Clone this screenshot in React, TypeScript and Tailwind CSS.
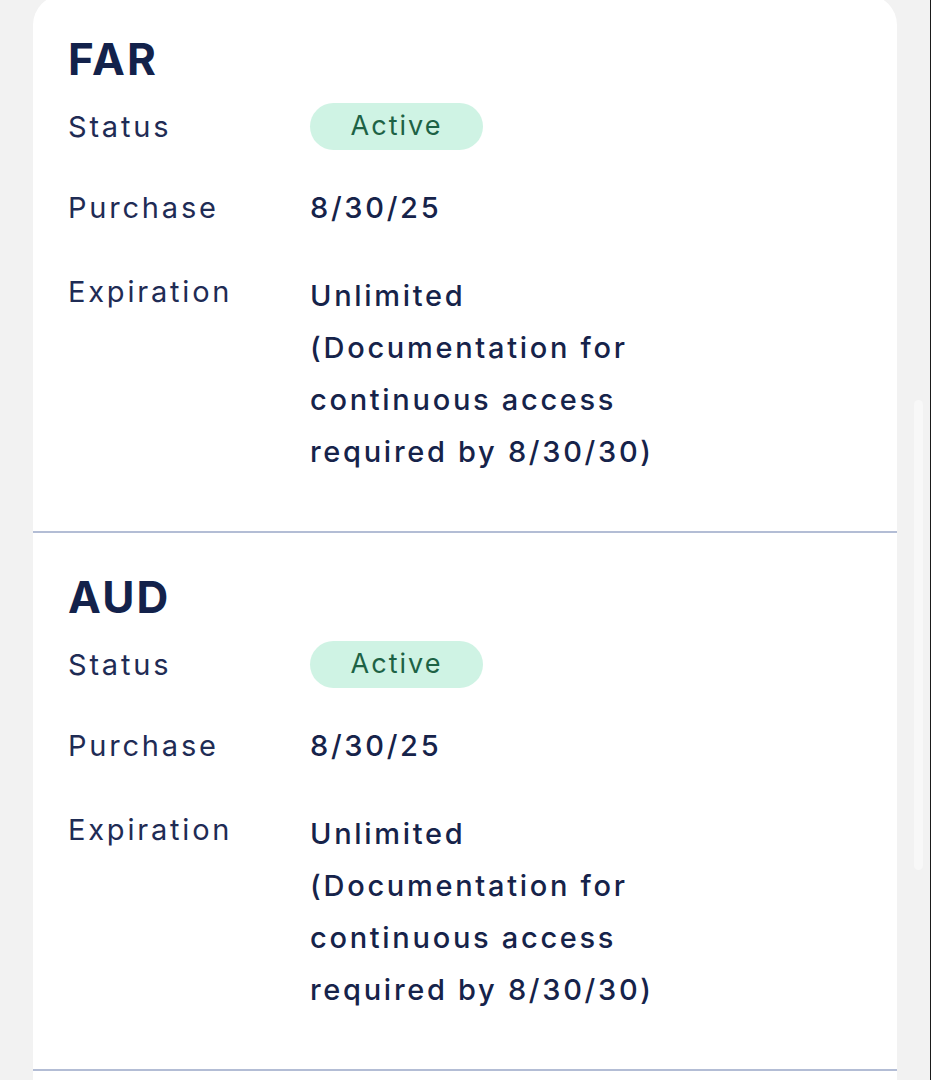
import React from "react";

const font = { fontFamily: "Inter, 'Noto Sans', sans-serif" };

function Section({ title }: { title: string }) {
  return (
    <div className="pt-[40px] pb-[53px] pl-[35px] border-b-2 border-[#b3bdd5]">
      <h2 className="text-[44px] leading-[48px] font-bold text-[#13224b] tracking-[2.2px]">{title}</h2>
      <div className="mt-[20px] grid grid-cols-[242px_1fr] items-center">
        <div className="text-[29px] leading-[47px] text-[#1f2c55] tracking-[2.8px]">Status</div>
        <div>
          <span className="inline-flex items-center justify-center w-[173px] h-[47px] rounded-full bg-[#cff3e4] text-[#1d6245] text-[27px] tracking-[2px]">
            Active
          </span>
        </div>
      </div>
      <div className="mt-[32px] grid grid-cols-[242px_1fr]">
        <div className="text-[29px] leading-[52px] text-[#1f2c55] tracking-[2.8px]">Purchase</div>
        <div className="text-[29px] leading-[52px] font-medium text-[#16234a] tracking-[2.7px]">8/30/25</div>
      </div>
      <div className="mt-[36px] grid grid-cols-[242px_1fr]">
        <div className="text-[29px] leading-[52px] text-[#1f2c55] -mt-[4px] tracking-[2.8px]">Expiration</div>
        <div className="text-[29px] leading-[52px] font-medium text-[#16234a] w-[420px] tracking-[2.7px]">
          Unlimited
          <br />
          (Documentation for
          <br />
          continuous access
          <br />
          required by 8/30/30)
        </div>
      </div>
    </div>
  );
}

export default function App() {
  return (
    <div className="w-[931px] h-[1080px] overflow-hidden bg-[#f2f2f2] flex relative" style={font}>
      <div className="w-[930px] h-full">
        <div className="ml-[33px] w-[864px] -mt-[5px] bg-white rounded-t-[30px]">
          <Section title="FAR" />
          <Section title="AUD" />
          <div className="h-[40px]" />
        </div>
      </div>
      <div className="w-[1px] h-full bg-[#1a1a1a]" />
      <div className="absolute left-[914px] top-[400px] w-[9px] h-[470px] rounded-full bg-[#f8f8f8]" />
    </div>
  );
}
